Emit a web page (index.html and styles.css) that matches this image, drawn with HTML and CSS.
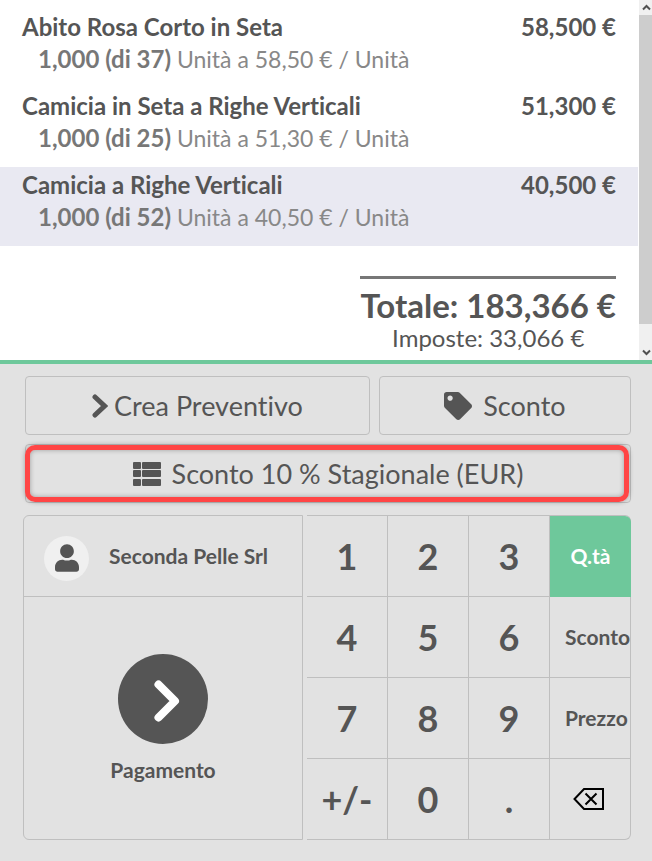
FILE: index.html
```html
<!DOCTYPE html>
<html lang="it">
<head>
<meta charset="utf-8">
<meta name="viewport" content="width=device-width, initial-scale=1">
<title>Punto vendita</title>
<link rel="stylesheet" href="styles.css">
</head>
<body>
<main class="pos">
  <section class="order">
    <div class="order-content">
      <ul class="orderlines">
        <li class="orderline">
          <div class="line-head"><span>Abito Rosa Corto in Seta</span><span>58,500 €</span></div>
          <div class="line-info"><em>1,000 (di 37)</em> Unità a 58,50 € / Unità</div>
        </li>
        <li class="orderline">
          <div class="line-head"><span>Camicia in Seta a Righe Verticali</span><span>51,300 €</span></div>
          <div class="line-info"><em>1,000 (di 25)</em> Unità a 51,30 € / Unità</div>
        </li>
        <li class="orderline selected">
          <div class="line-head"><span>Camicia a Righe Verticali</span><span>40,500 €</span></div>
          <div class="line-info"><em>1,000 (di 52)</em> Unità a 40,50 € / Unità</div>
        </li>
      </ul>
      <div class="summary">
        <div class="total-box">
          <div class="total">Totale: 183,366 €</div>
          <div class="taxes">Imposte: 33,066 €</div>
        </div>
      </div>
    </div>
    <div class="scrollbar" aria-hidden="true">
      <svg class="scroll-arrow" viewBox="0 0 13 15"><path d="M4 9.500 7.500 6 11 9.500"/></svg>
      <div class="scroll-thumb"></div>
      <svg class="scroll-arrow" viewBox="0 0 13 15"><path d="M4 5.500 7.500 9 11 5.500"/></svg>
    </div>
  </section>

  <section class="controls">
    <div class="actions">
      <button class="action" type="button">
        <svg class="icon-chevron" viewBox="0 0 16 24"><path d="M3 3 12.500 12 3 21"/></svg>
        <span>Crea Preventivo</span>
      </button>
      <button class="action spaced" type="button">
        <svg class="icon-tag" viewBox="0 0 512 512"><path d="M0 252.100V48C0 21.500 21.500 0 48 0h204.100a48 48 0 0 1 33.900 14.100l211.900 211.900c18.700 18.700 18.700 49.100 0 67.900L293.800 497.900c-18.700 18.700-49.100 18.700-67.900 0L14.100 286.100A48 48 0 0 1 0 252.100zM112 64c-26.500 0-48 21.500-48 48s21.500 48 48 48 48-21.500 48-48-21.500-48-48-48z"/></svg>
        <span>Sconto</span>
      </button>
      <button class="action spaced wide" type="button">
        <svg class="icon-list" viewBox="0 0 28 24"><rect x="0" y="0" width="8" height="7" rx="1"/><rect x="9" y="0" width="19" height="7" rx="1"/><rect x="0" y="8" width="8" height="7" rx="1"/><rect x="9" y="8" width="19" height="7" rx="1"/><rect x="0" y="17" width="8" height="7" rx="1"/><rect x="9" y="17" width="19" height="7" rx="1"/></svg>
        <span>Sconto 10 % Stagionale (EUR)</span>
      </button>
    </div>

    <div class="pads">
      <div class="actionpad">
        <button class="customer" type="button">
          <span class="avatar"><svg viewBox="0 0 448 512"><path d="M224 256c70.700 0 128-57.300 128-128S294.700 0 224 0 96 57.300 96 128s57.300 128 128 128zm89.600 32h-16.700c-22.200 10.200-46.900 16-72.900 16s-50.600-5.800-72.900-16h-16.700C60.200 288 0 348.200 0 422.400V464c0 26.500 21.500 48 48 48h352c26.500 0 48-21.500 48-48v-41.600c0-74.200-60.200-134.400-134.400-134.400z"/></svg></span>
          <span class="customer-name">Seconda Pelle Srl</span>
        </button>
        <button class="pay" type="button">
          <span class="pay-circle"><svg viewBox="0 0 26 42"><path d="M4.500 4.500 21 21 4.500 37.500"/></svg></span>
          <span>Pagamento</span>
        </button>
      </div>
      <div class="numpad">
        <button type="button">1</button><button type="button">2</button><button type="button">3</button><button class="mode active" type="button">Q.tà</button>
        <button type="button">4</button><button type="button">5</button><button type="button">6</button><button class="mode" type="button">Sconto</button>
        <button type="button">7</button><button type="button">8</button><button type="button">9</button><button class="mode" type="button">Prezzo</button>
        <button type="button">+/-</button><button type="button">0</button><button type="button">.</button><button class="mode erase" type="button" aria-label="Cancella"><svg viewBox="0 0 31 22"><path d="M11 1H30V21H11L1.500 11ZM12.500 5.500 23.500 16.500M23.500 5.500 12.500 16.500"/></svg></button>
      </div>
    </div>
  </section>
</main>
</body>
</html>
```
FILE: styles.css
```css
* {
  box-sizing: border-box;
}

body {
  margin: 0;
  background: #e2e2e2;
  color: #555;
  font-family: Lato, sans-serif;
  font-size: 24px;
  font-variant-ligatures: none;
  line-height: 32px;
}

button {
  margin: 0;
  padding: 0;
  border: 0 solid #bfbfbf;
  background: transparent;
  color: inherit;
  font: inherit;
  font-variant-ligatures: none;
  cursor: pointer;
}

svg {
  display: block;
  flex: none;
}

/* Order */
.order {
  display: flex;
  background: #fff;
  border-bottom: 4px solid #6ec89b;
}

.order-content {
  flex: 1;
  min-width: 0;
  margin-right: 1px;
  padding: 9px 0;
}

.orderlines {
  margin: 0;
  padding: 0;
  list-style: none;
}

.orderline {
  padding: 2px 22px 13px;
}

.orderline.selected {
  background: #e9e9f2;
}

.line-head {
  display: flex;
  justify-content: space-between;
  font-weight: bold;
}

.line-info {
  padding-left: 16px;
  color: #888;
  font-size: 23px;
}

.line-info em {
  color: #777;
  font-size: 24px;
  font-style: normal;
  font-weight: bold;
}

.summary {
  display: flex;
  justify-content: flex-end;
  padding: 30px 22px 0;
}

.total-box {
  border-top: 3px solid #777;
  text-align: center;
}

.total {
  padding-top: 6px;
  font-size: 33px;
  font-weight: bold;
  line-height: 40px;
}

.taxes {
  line-height: 26px;
}

.scrollbar {
  display: flex;
  flex-direction: column;
  width: 13px;
  background: #f0f0f0;
}

.scroll-thumb {
  flex: 1;
  margin-bottom: 21px;
  background: #cdcdcd;
}

.scroll-arrow {
  width: 13px;
  height: 15px;
  fill: none;
  stroke: #505050;
  stroke-width: 2;
}

/* Action buttons */
.controls {
  padding: 12px 21px 21px 23px;
}

.actions {
  display: grid;
  grid-template-columns: 26fr 19fr;
  gap: 9px;
  padding-left: 2px;
}

.action {
  display: flex;
  align-items: center;
  justify-content: center;
  gap: 6px;
  height: 59px;
  border-width: 1px;
  border-radius: 4px;
  font-size: 27px;
}

.action.spaced {
  gap: 11px;
}

.action svg {
  fill: #555;
}

.action.wide {
  position: relative;
  grid-column: 1 / -1;
}

.action.wide::after {
  content: "";
  position: absolute;
  inset: 0 1px 0 -1px;
  border: 5px solid #ff4545;
  border-radius: 10px;
  box-shadow: 0 0 5px rgba(0, 0, 0, 0.3), inset 0 0 5px rgba(0, 0, 0, 0.3);
}

.action .icon-chevron {
  width: 16px;
  height: 24px;
  fill: none;
  stroke: #555;
  stroke-width: 5;
  stroke-linecap: round;
}

.icon-tag {
  width: 28px;
  height: 28px;
}

.icon-list {
  width: 28px;
  height: 24px;
}

/* Pads */
.pads {
  display: grid;
  grid-template-columns: 70fr 81fr;
  gap: 4px;
  margin-top: 12px;
  font-size: 21px;
  font-weight: bold;
}

.actionpad {
  display: flex;
  flex-direction: column;
  border: 1px solid #bfbfbf;
  border-radius: 6px 0 0 6px;
}

.customer {
  display: flex;
  align-items: center;
  gap: 20px;
  height: 81px;
  padding: 4px 20px 0;
  border-bottom-width: 1px;
  text-align: left;
}

.avatar {
  display: grid;
  place-items: center;
  width: 45px;
  height: 45px;
  border-radius: 50%;
  background: #f0f0f0;
}

.avatar svg {
  width: 24px;
  height: 28px;
  fill: #555;
}

.customer-name {
  flex: 1;
  padding-bottom: 4px;
}

.pay {
  display: flex;
  flex: 1;
  flex-direction: column;
  align-items: center;
  justify-content: center;
  gap: 10px;
  padding-top: 3px;
}

.pay-circle {
  display: grid;
  place-items: center;
  width: 90px;
  height: 90px;
  padding: 4px 0 0 8px;
  border-radius: 50%;
  background: #555;
}

.pay-circle svg {
  width: 26px;
  height: 42px;
  fill: none;
  stroke: #fff;
  stroke-width: 8;
  stroke-linecap: round;
  stroke-linejoin: round;
}

.numpad {
  display: grid;
  grid-template-columns: 81fr 81fr 81fr 80fr;
  grid-template-rows: 81px 81px 81px 80px;
  border: 1px solid #bfbfbf;
  border-left: 0;
  border-radius: 0 6px 6px 0;
}

.numpad button {
  min-width: 0;
  border-width: 0 1px 1px 0;
  font-size: 36px;
}

.numpad .mode {
  padding: 0 0 0 15px;
  border-right-width: 0;
  font-size: 21px;
  text-align: left;
}

.numpad .active {
  margin-right: -1px;
  padding: 0;
  border-color: #6ec89b;
  border-radius: 0 6px 0 0;
  background: #6ec89b;
  color: #fff;
  text-align: center;
}

.numpad .erase {
  padding-left: 23px;
}

.numpad button:nth-last-child(-n + 4) {
  border-bottom-width: 0;
}

.erase svg {
  width: 31px;
  height: 22px;
  fill: none;
  stroke: #000;
  stroke-width: 2;
}
```
